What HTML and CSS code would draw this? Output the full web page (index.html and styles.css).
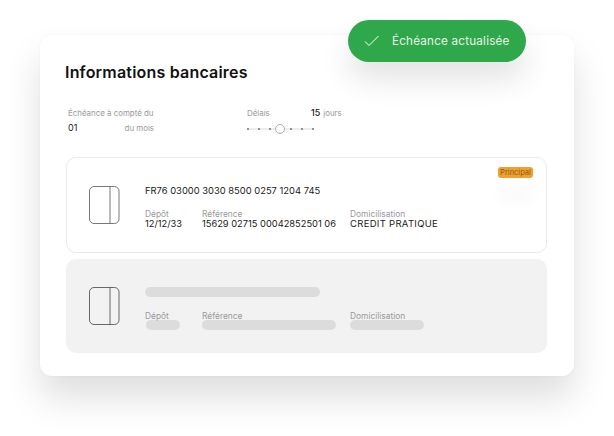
FILE: index.html
```html
<!DOCTYPE html>
<html lang="fr">
<head>
<meta charset="utf-8">
<title>Informations bancaires</title>
<link rel="stylesheet" href="styles.css">
</head>
<body>
<main class="stage">
  <div class="toast">
    <svg class="toast-check" width="16" height="12" viewBox="0 0 16 12"><path d="M1 6.5 L5 10.5 L14.5 1" fill="none" stroke="#fff" stroke-width="1"/></svg>
    <span>Échéance actualisée</span>
  </div>
  <section class="card">
    <h1 class="title">Informations bancaires</h1>
    <div class="settings">
      <div class="setting-due">
        <div class="label">Échéance à compté du</div>
        <div class="due-line"><span class="strong due-day">01</span><span class="label">du mois</span></div>
      </div>
      <div class="setting-delay">
        <div class="delay-line"><span class="label delay-label">Délais</span><span class="strong">15</span><span class="label">jours</span></div>
        <svg class="slider" width="68" height="12" viewBox="0 0 68 12">
          <path d="M0.5 6H28M38 6H66.5" stroke="#c4c4c4" stroke-width="0.6"/>
          <g fill="#666"><circle cx="1" cy="6" r="0.9"/><circle cx="12" cy="6" r="0.9"/><circle cx="23" cy="6" r="0.9"/><circle cx="44" cy="6" r="0.9"/><circle cx="55" cy="6" r="0.9"/><circle cx="66" cy="6" r="0.9"/></g>
          <circle cx="33" cy="6" r="4.5" fill="#fff" stroke="#888" stroke-width="0.7"/>
        </svg>
      </div>
    </div>
    <div class="accounts">
      <article class="account account-main">
        <span class="badge">Principal</span>
        <svg class="bank-card" width="31" height="38" viewBox="0 0 31 38"><rect x="0.5" y="0.5" width="29.5" height="37" rx="4.5" fill="none" stroke="#555" stroke-width="0.8"/><path d="M21 0.5V37.5" stroke="#555" stroke-width="0.8"/></svg>
        <div class="details">
          <div class="iban">FR76 03000 3030 8500 0257 1204 745</div>
          <div class="columns">
            <div class="col-depot"><div class="label">Dépôt</div><div class="value">12/12/33</div></div>
            <div class="col-ref"><div class="label">Référence</div><div class="value">15629 02715 00042852501 06</div></div>
            <div><div class="label">Domicilisation</div><div class="value value-caps">CREDIT PRATIQUE</div></div>
          </div>
        </div>
      </article>
      <article class="account account-empty">
        <svg class="bank-card" width="31" height="38" viewBox="0 0 31 38"><rect x="0.5" y="0.5" width="29.5" height="37" rx="4.5" fill="none" stroke="#444" stroke-width="0.8"/><path d="M21 0.5V37.5" stroke="#444" stroke-width="0.8"/></svg>
        <div class="details">
          <div class="bar bar-iban"></div>
          <div class="columns">
            <div class="col-depot"><div class="label">Dépôt</div><div class="bar bar-depot"></div></div>
            <div class="col-ref"><div class="label">Référence</div><div class="bar bar-ref"></div></div>
            <div><div class="label">Domicilisation</div><div class="bar bar-dom"></div></div>
          </div>
        </div>
      </article>
    </div>
  </section>
</main>
</body>
</html>
```

FILE: styles.css
```css
* { box-sizing: border-box; }
html, body { margin: 0; background: #fff; }
body {
  width: 614px;
  height: 436px;
  overflow: hidden;
  font-family: Inter, "Noto Sans", sans-serif;
  color: #1a1a1a;
}
.stage { position: relative; padding: 35px 40px 0; }

.toast {
  position: absolute;
  left: 348px;
  top: 20px;
  width: 178px;
  height: 42px;
  display: flex;
  align-items: center;
  gap: 12px;
  padding-left: 16px;
  border-radius: 21px;
  background: #2ea84a;
  color: #e6f5e9;
  font-size: 11.7px;
  letter-spacing: 0.2px;
  box-shadow: 0 18px 30px rgba(0, 0, 0, 0.11);
  z-index: 2;
}
.toast-check { flex: none; }

.card {
  width: 534px;
  height: 341px;
  padding: 27px 27px 24px 26px;
  background: #fff;
  border-radius: 12px;
  box-shadow: 0 22px 36px rgba(0, 0, 0, 0.13), 0 0 3px rgba(0, 0, 0, 0.04);
}
.title {
  margin: 0 0 0 -1px;
  font-size: 16px;
  line-height: 20px;
  font-weight: 600;
  color: #111;
  letter-spacing: 0.2px;
}
.settings {
  display: flex;
  margin-top: 26px;
  padding-left: 2px;
  height: 49px;
}
.label {
  font-size: 7.9px;
  line-height: 10px;
  color: #999;
}
.columns .label { font-size: 8.4px; }
.strong { font-size: 9px; line-height: 12px; color: #222; font-weight: 500; }
.due-day { font-weight: 400; }
.setting-due { width: 179px; }
.due-line {
  display: flex;
  justify-content: space-between;
  align-items: center;
  width: 86px;
  margin-top: 4px;
}
.delay-line { display: flex; align-items: center; gap: 3px; height: 10px; }
.delay-label { width: 61px; }
.slider { display: block; margin-top: 5px; }

.accounts { display: flex; flex-direction: column; gap: 5.5px; }
.account {
  position: relative;
  display: flex;
  align-items: center;
  height: 96px;
  padding-left: 23px;
  border-radius: 10px;
}
.account-main { border: 1px solid #e9e9e9; padding-left: 22px; }
.account-main .details { padding-top: 3px; }
.account-empty { height: 94px; background: #f2f2f2; }
.bank-card { flex: none; }
.account-empty .bank-card { margin-top: 1px; }
.details { margin-left: 25px; padding-top: 5px; }
.iban { font-size: 9.4px; line-height: 12px; color: #1a1a1a; }
.columns { display: flex; margin-top: 12px; }
.col-depot { width: 57px; }
.col-ref { width: 148px; }
.value { font-size: 9.3px; line-height: 10px; color: #1a1a1a; }
.value-caps { font-size: 9.5px; letter-spacing: 0.3px; }

.badge {
  position: absolute;
  right: 13px;
  top: 9px;
  width: 35px;
  height: 11px;
  border-radius: 3px;
  background: #f0a030;
  color: #8a5a14;
  font-size: 7.5px;
  line-height: 11px;
  text-align: center;
  box-shadow: 0 22px 14px rgba(0, 0, 0, 0.03);
}

.bar { height: 10px; border-radius: 5px; background: #dcdcdc; }
.bar-iban { width: 175px; }
.account-empty .columns { margin-top: 14px; }
.account-empty .label { margin-bottom: -1px; }
.bar-depot { width: 34px; margin-left: 1px; }
.bar-ref { width: 134px; }
.bar-dom { width: 74px; }
```
